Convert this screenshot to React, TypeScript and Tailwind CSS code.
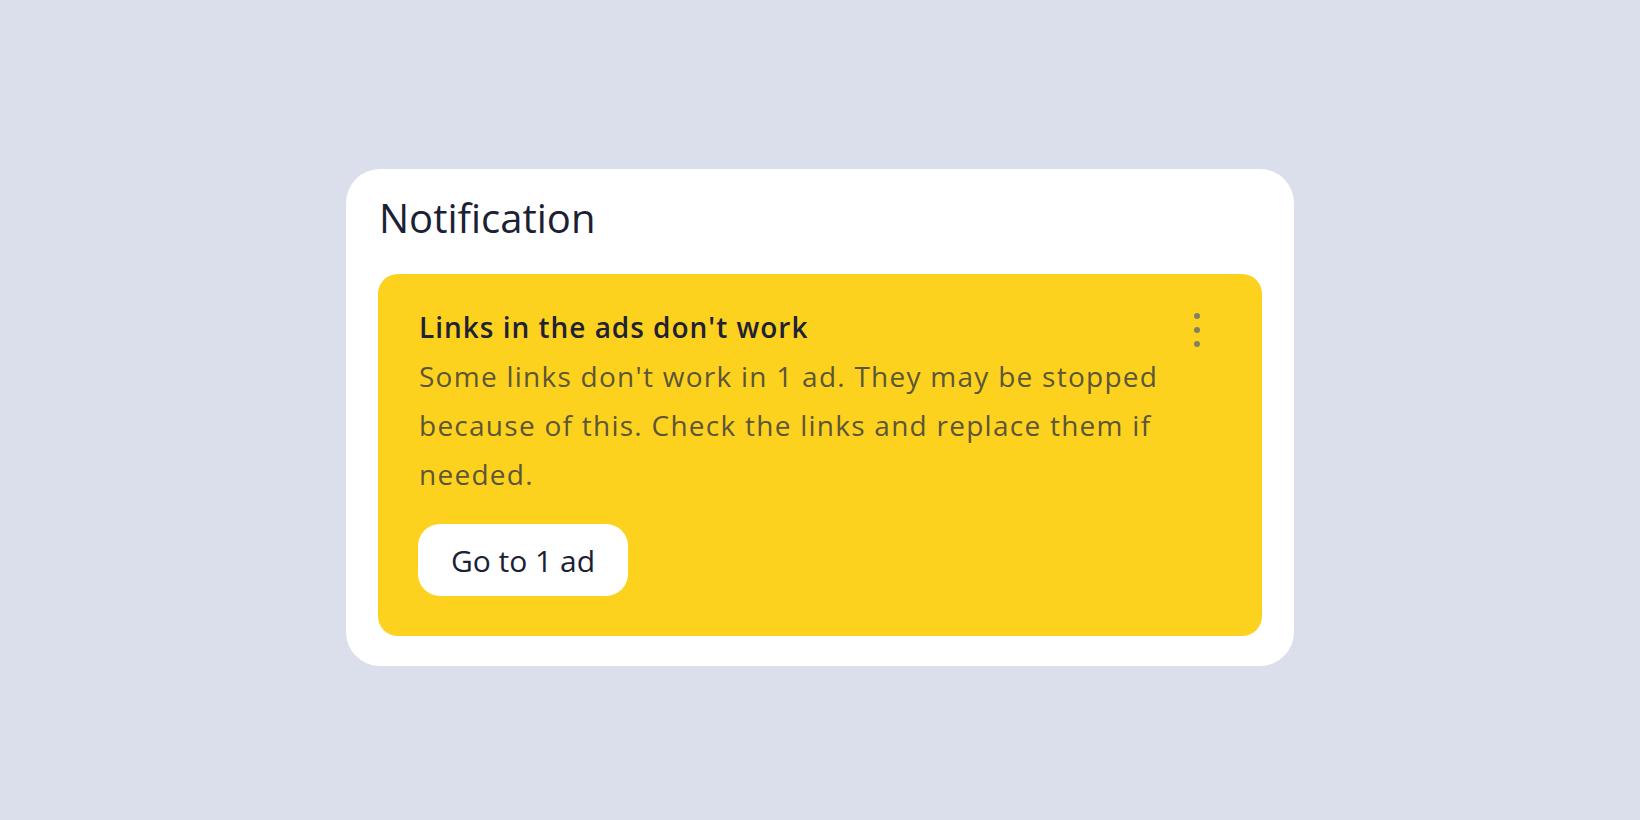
import React from "react";

export default function App() {
  return (
    <div
      className="min-h-screen w-full bg-[#dadfeb] flex items-center justify-center pt-[15px]"
      style={{ fontFamily: "'Open Sans', 'Noto Sans', sans-serif" }}
    >
      <div className="w-[948px] bg-white rounded-[34px] px-[32px] pt-[25px] pb-[30px]">
        <h1 className="text-[40px] leading-[48px] text-[#1b2133] font-normal pl-[1px]">
          Notification
        </h1>
        <div className="relative mt-[32px] bg-[#fdd21f] rounded-[20px] pl-[41px] pr-[40px] pt-[35px] pb-[40px]">
          <div className="text-[28px] leading-[36px] font-semibold tracking-[0.035em] text-[#1e2235]">
            Links in the ads don't work
          </div>
          <p className="mt-[7px] w-[780px] text-[28px] leading-[49px] tracking-[0.045em] text-[#5c5637]">
            Some links don't work in 1 ad. They may be stopped because of this. Check the links and replace them if needed.
          </p>
          <button className="mt-[25px] -ml-[1px] w-[210px] h-[72px] rounded-[22px] bg-white text-[30px] text-[#1b2133] flex items-center justify-center">
            Go to 1 ad
          </button>
          <div className="absolute right-[62px] top-[39px] flex flex-col gap-[8px]">
            <span className="block w-[6px] h-[6px] rounded-full bg-[#857f63]" />
            <span className="block w-[6px] h-[6px] rounded-full bg-[#857f63]" />
            <span className="block w-[6px] h-[6px] rounded-full bg-[#857f63]" />
          </div>
        </div>
      </div>
    </div>
  );
}
